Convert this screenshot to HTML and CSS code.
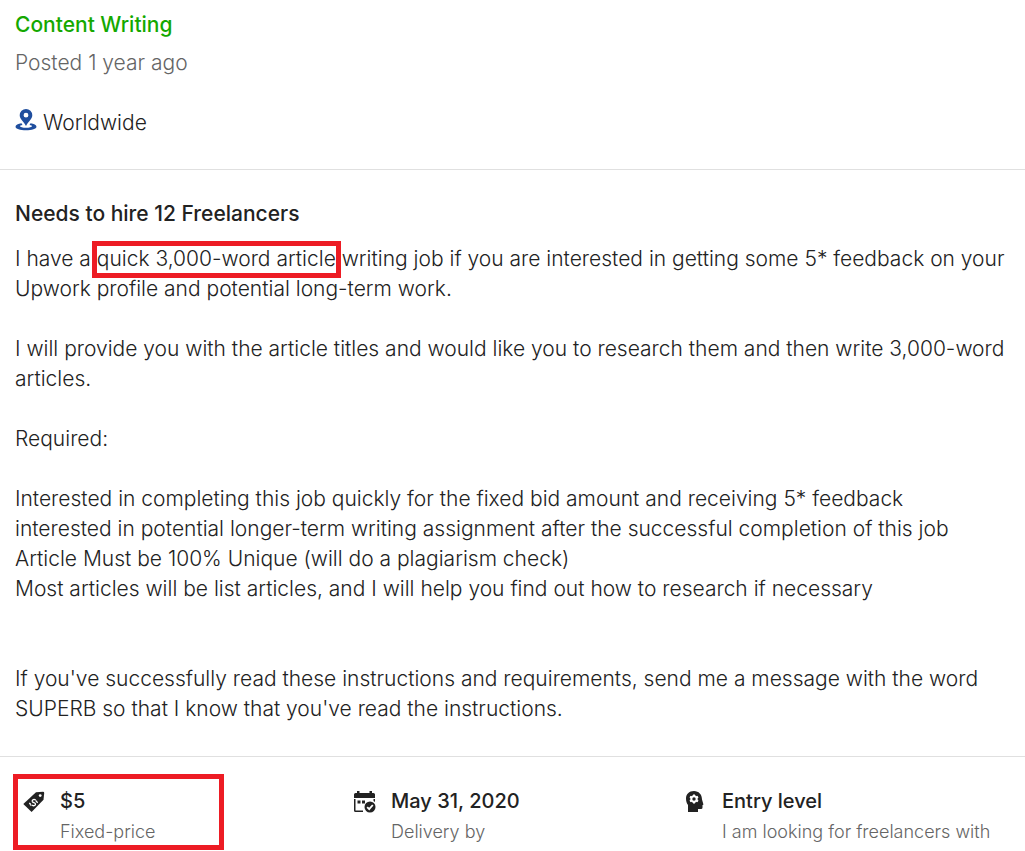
FILE: index.html
```html
<!DOCTYPE html>
<html lang="en">
<head>
  <meta charset="UTF-8">
  <meta name="viewport" content="width=device-width, initial-scale=1.0">
  <title>Content Writing</title>
  <link rel="stylesheet" href="styles.css">
</head>
<body>
  <main id="job">
    <header class="job-head">
      <a href="#" class="category">Content Writing</a>
      <p class="posted">Posted 1 year ago</p>
      <p class="location">
        <svg class="pin" viewBox="0 0 22 22" aria-hidden="true">
          <path fill-rule="evenodd" d="M11 0a6.300 6.300 0 0 0-6.300 6.300c0 4 4.300 6.500 6.300 10.700 2-4.200 6.300-6.700 6.300-10.700a6.300 6.300 0 0 0-6.300-6.300zm0 3.800a2.400 2.400 0 1 1 0 4.800 2.400 2.400 0 0 1 0-4.800z"/>
          <path d="M6.500 14.300C3 14.800 0.500 16 0.500 17.700c0 2 4.700 3.500 10.500 3.500s10.500-1.500 10.500-3.500c0-1.700-2.500-2.900-6-3.400l-1 1.800c1.800.2 2.500.6 2.500 1.100 0 .9-2.700 1.500-6 1.500s-6-.6-6-1.500c0-.5.7-.9 2.500-1.100z"/>
        </svg>
        <span>Worldwide</span>
      </p>
    </header>

    <section class="job-desc">
      <h2>Needs to hire 12 Freelancers</h2>
      <p>I have a <mark>quick 3,000-word article</mark> writing job if you are interested in getting some 5* feedback on your Upwork profile and potential long-term work.</p>
      <p>I will provide you with the article titles and would like you to research them and then write 3,000-word articles.</p>
      <p>Required:</p>
      <p>Interested in completing this job quickly for the fixed bid amount and receiving 5* feedback<br>
        interested in potential longer-term writing assignment after the successful completion of this job<br>
        Article Must be 100% Unique (will do a plagiarism check)<br>
        Most articles will be list articles, and I will help you find out how to research if necessary</p>
      <p class="closing">If you've successfully read these instructions and requirements, send me a message with the word SUPERB so that I know that you've read the instructions.</p>
    </section>

    <ul class="features">
      <li class="boxed">
        <svg viewBox="0 0 22 22" aria-hidden="true">
          <path d="M0.300 13 13 1.300 20 .8q1.300 0 1.200 1.300L20.500 8.800 8.600 21z"/>
          <circle class="hole" cx="17.200" cy="4.600" r="1.400"/>
          <path class="line" d="M12.700 9.300C11.200 7.600 8.800 8.700 9.300 10.500c.5 1.500 2.200.6 3 2 .8 1.700-1.400 3.200-3.200 1.500M6.200 12.100l1.500 1.100M13.500 10.600l1.200 1.100M8.300 14.700l-1.500-2M12.800 9.600l1.200 1.400"/>
        </svg>
        <div>
          <strong>$5</strong>
          <small>Fixed-price</small>
        </div>
      </li>
      <li>
        <svg viewBox="0 0 22 22" aria-hidden="true">
          <path d="M0 3.500Q0 2 1.500 2H3V0h2.500v2h10V0H18v2h1.500Q21 2 21 3.500V7H0z"/>
          <path d="M0 8h1.500v11.500H9V21H1.500Q0 21 0 19.500zM19.500 8H21v3l-1.500-1zM3.500 9.500h3v3h-3zM8 9.500h3v3H8z"/>
          <circle cx="16" cy="16" r="5.500"/>
          <path class="line check" d="m13.200 16.200 2 2 3.600-4.200"/>
        </svg>
        <div>
          <strong>May 31, 2020</strong>
          <small>Delivery by</small>
        </div>
      </li>
      <li>
        <svg viewBox="0 0 22 22" aria-hidden="true">
          <path d="M9 0C4 0 1 3.300 1 7.500c0 3 .8 4.700 2 6.500v7h10v-3h3q1.500 0 1.500-1.500V14H18q.6-.3.300-.9L17 8.500C17 3.500 13.700 0 9 0z"/>
          <circle class="gear" cx="9" cy="8" r="2.700"/>
          <path class="teeth" d="M9 3.400v1.700M9 10.900v1.700M5 5.700l1.500.9M11.500 9.400l1.500.9M5 10.300l1.500-.9M11.500 6.600l1.500-.9"/>
        </svg>
        <div>
          <strong>Entry level</strong>
          <small>I am looking for freelancers with</small>
        </div>
      </li>
    </ul>
  </main>
</body>
</html>
```
FILE: styles.css
```css
*, *::after{margin: 0; padding: 0; box-sizing: border-box;}
body{
  background: #fff;
  color: #222;
  font-family: Inter, "Liberation Sans", sans-serif;
  font-size: 21px;
  font-weight: 300;
  line-height: 30px;
}
.job-head{
  padding: 10px 15px 31px;
  border-bottom: 1px solid #e0e0e0;
}
.category{
  display: block;
  color: #14a800;
  font-weight: 500;
  text-decoration: none;
}
.posted{
  margin-top: 8px;
  color: #656565;
}
.location{
  display: flex;
  align-items: center;
  gap: 6px;
  margin-top: 30px;
}
.pin{
  width: 22px;
  height: 22px;
  margin-bottom: 6px;
  fill: #1f4e9e;
}
.job-desc{
  padding: 29px 15px 32px;
  border-bottom: 1px solid #e0e0e0;
}
.job-desc h2{
  margin-bottom: 15px;
  font-size: 21px;
  font-weight: 500;
}
.job-desc p + p{
  margin-top: 30px;
}
.job-desc .closing{
  margin-top: 60px;
}
mark{
  background: none;
  color: inherit;
  padding-bottom: 2px;
  outline: 5px solid #ed1c24;
}
.features{
  display: grid;
  grid-template-columns: repeat(3, 1fr);
  padding: 29px 9px 3px 23px;
  list-style: none;
}
.features li{
  display: flex;
  gap: 15px;
  position: relative;
}
.features svg{
  flex: none;
  width: 22px;
  height: 22px;
  margin-top: 5px;
  fill: #222;
}
.features .line, .features .teeth{
  fill: none;
  stroke: #fff;
  stroke-width: 1.3;
}
.features .check{
  stroke-width: 1.8;
}
.features .teeth{
  stroke-width: 2;
}
.features .hole{
  fill: #fff;
}
.features .gear{
  fill: #222;
  stroke: #fff;
  stroke-width: 2;
}
.features strong, .features small{
  display: block;
}
.features strong{
  font-size: 20px;
  font-weight: 500;
}
.features small{
  color: #656565;
  font-size: 18px;
  line-height: 32px;
  white-space: nowrap;
}
/* red frame around the price */
.boxed::after{
  content: "";
  position: absolute;
  left: -10px;
  top: -12px;
  width: 211px;
  height: 76px;
  border: 5px solid #ed1c24;
}
```
